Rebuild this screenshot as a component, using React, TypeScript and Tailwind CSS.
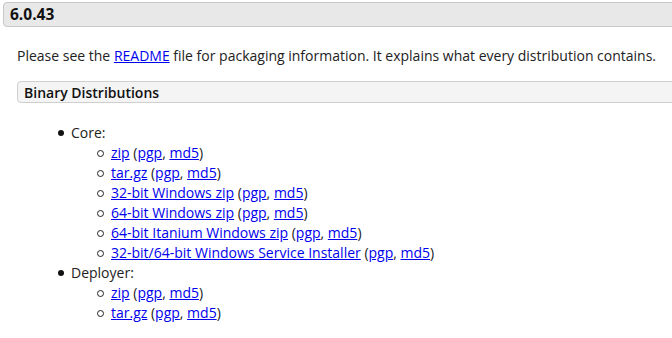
import React from "react";

const A = ({ children }: { children: React.ReactNode }) => (
  <a href="#" className="text-[#0000ee] underline">{children}</a>
);

const Sub = ({ name }: { name: string }) => (
  <li className="flex items-center h-[20px]">
    <span className="w-[7px] h-[7px] rounded-full border border-[#222]" />
    <span className="ml-[7px]">
      <A>{name}</A> (<A>pgp</A>, <A>md5</A>)
    </span>
  </li>
);

export default function App() {
  return (
    <div className="w-[672px] h-[338px] overflow-hidden bg-white text-[#222] text-[14px]" style={{ fontFamily: '"Open Sans", sans-serif' }}>
      <div className="pt-[2px] pl-[3px]">
        <div className="-mr-[20px] h-[25px] bg-[#e8e8e8] border border-[#c8c8c8] rounded-l-[4px] flex items-center pl-[6px] font-bold text-[15.5px] text-[#111]">
          6.0.43
        </div>
      </div>
      <div className="pl-[17px]">
        <p className="mt-[19px] leading-[20px]">
          Please see the <A>README</A> file for packaging information. It explains what every distribution contains.
        </p>
        <div className="mt-[15px] -mr-[20px] h-[22px] bg-[#f4f4f4] border border-[#cfcfcf] rounded-l-[4px] flex items-center pl-[6px] font-semibold text-[#111]">
          Binary Distributions
        </div>
        <ul className="mt-[20px] pl-[41px] leading-[20px]">
          <li>
            <div className="flex items-center h-[20px]">
              <span className="w-[6px] h-[6px] rounded-full bg-[#111] mr-[7px]" />
              <span>Core:</span>
            </div>
            <ul className="pl-[39px]">
              <Sub name="zip" />
              <Sub name="tar.gz" />
              <Sub name="32-bit Windows zip" />
              <Sub name="64-bit Windows zip" />
              <Sub name="64-bit Itanium Windows zip" />
              <Sub name="32-bit/64-bit Windows Service Installer" />
            </ul>
          </li>
          <li>
            <div className="flex items-center h-[20px]">
              <span className="w-[6px] h-[6px] rounded-full bg-[#111] mr-[7px]" />
              <span>Deployer:</span>
            </div>
            <ul className="pl-[39px]">
              <Sub name="zip" />
              <Sub name="tar.gz" />
            </ul>
          </li>
        </ul>
      </div>
    </div>
  );
}
